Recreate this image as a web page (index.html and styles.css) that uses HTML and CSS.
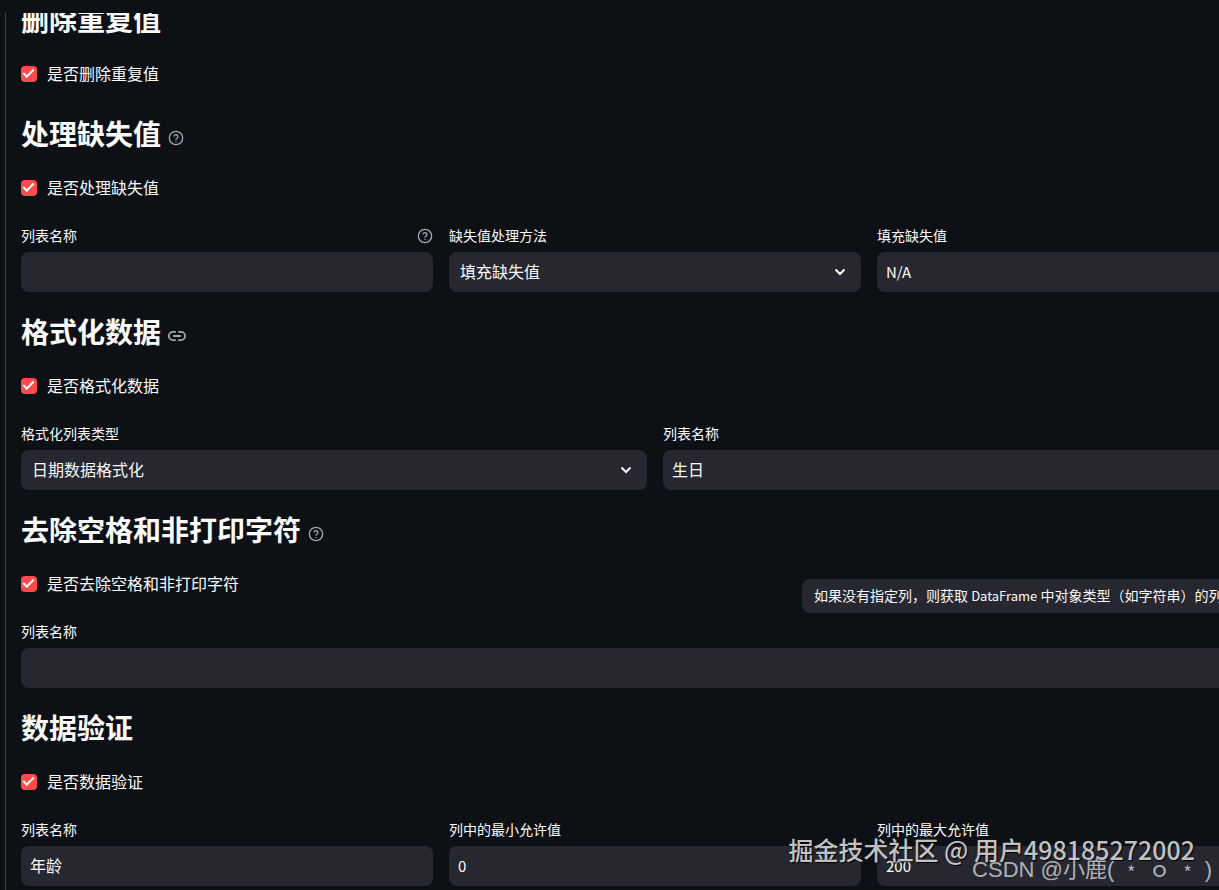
FILE: index.html
```html
<!DOCTYPE html>
<html lang="zh-CN">

<head>
    <meta charset="UTF-8">
    <meta name="viewport" content="width=device-width,initial-scale=1">
    <title>数据清洗</title>
    <link rel="stylesheet" href="styles.css">
</head>

<body>
    <svg class="defs" aria-hidden="true">
        <symbol id="help" viewBox="0 0 24 24">
            <circle cx="12" cy="12" r="10"></circle>
            <path d="M9.1 9a3 3 0 0 1 5.8 1c0 2-2.9 2.6-2.9 4"></path>
            <path d="M12 17.2v.1"></path>
        </symbol>
        <symbol id="link" viewBox="0 0 20 12">
            <path d="M8 1.5H5.5a4.5 4.5 0 0 0 0 9H8M12 1.5h2.5a4.5 4.5 0 0 1 0 9H12M6.5 6h7"></path>
        </symbol>
        <symbol id="down" viewBox="0 0 12 8">
            <path d="M1.5 1.5L6 6l4.5-4.5"></path>
        </symbol>
    </svg>
    <header class="topbar"></header>
    <main class="main">
        <form class="form">
            <section class="section">
                <h3 class="title">删除重复值</h3>
                <label class="check"><input type="checkbox" checked>是否删除重复值</label>
            </section>

            <section class="section">
                <h3 class="title">处理缺失值<svg class="icon"><use href="#help"></use></svg></h3>
                <label class="check"><input type="checkbox" checked>是否处理缺失值</label>
                <div class="row">
                    <div class="field">
                        <div class="label">
                            <label for="missing-cols">列表名称</label>
                            <svg class="icon"><use href="#help"></use></svg>
                        </div>
                        <input class="control" id="missing-cols" type="text">
                    </div>
                    <div class="field">
                        <div class="label"><label for="missing-way">缺失值处理方法</label></div>
                        <div class="select">
                            <select class="control" id="missing-way">
                                <option>填充缺失值</option>
                            </select>
                            <svg class="arrow"><use href="#down"></use></svg>
                        </div>
                    </div>
                    <div class="field">
                        <div class="label"><label for="missing-fill">填充缺失值</label></div>
                        <input class="control latin" id="missing-fill" type="text" value="N/A">
                    </div>
                </div>
            </section>

            <section class="section">
                <h3 class="title">格式化数据<svg class="icon link"><use href="#link"></use></svg></h3>
                <label class="check"><input type="checkbox" checked>是否格式化数据</label>
                <div class="row">
                    <div class="field">
                        <div class="label"><label for="format-type">格式化列表类型</label></div>
                        <div class="select">
                            <select class="control" id="format-type">
                                <option>日期数据格式化</option>
                            </select>
                            <svg class="arrow"><use href="#down"></use></svg>
                        </div>
                    </div>
                    <div class="field">
                        <div class="label"><label for="format-cols">列表名称</label></div>
                        <input class="control" id="format-cols" type="text" value="生日">
                    </div>
                </div>
            </section>

            <section class="section">
                <h3 class="title">去除空格和非打印字符<svg class="icon"><use href="#help"></use></svg></h3>
                <label class="check"><input type="checkbox" checked>是否去除空格和非打印字符</label>
                <div class="row">
                    <div class="field">
                        <div class="label"><label for="strip-cols">列表名称</label></div>
                        <input class="control" id="strip-cols" type="text">
                    </div>
                </div>
                <div class="tooltip" role="tooltip">如果没有指定列，则获取 <code>DataFrame</code> 中对象类型（如字符串）的列</div>
            </section>

            <section class="section">
                <h3 class="title">数据验证</h3>
                <label class="check"><input type="checkbox" checked>是否数据验证</label>
                <div class="row">
                    <div class="field">
                        <div class="label"><label for="valid-cols">列表名称</label></div>
                        <input class="control" id="valid-cols" type="text" value="年龄">
                    </div>
                    <div class="field">
                        <div class="label"><label for="valid-min">列中的最小允许值</label></div>
                        <input class="control latin" id="valid-min" type="text" value="0">
                    </div>
                    <div class="field">
                        <div class="label"><label for="valid-max">列中的最大允许值</label></div>
                        <input class="control latin" id="valid-max" type="text" value="200">
                    </div>
                </div>
            </section>
        </form>
    </main>
    <div class="mark mark-juejin">掘金技术社区 @ 用户498185272002</div>
    <div class="mark mark-csdn">CSDN @小鹿( ﹡ ｏ ﹡ )</div>
</body>

</html>
```
FILE: styles.css
```css
* {
    box-sizing: border-box;
    margin: 0;
    padding: 0;
}

body {
    display: flex;
    flex-direction: column;
    height: 100vh;
    overflow: hidden;
    position: relative;
    background: #0d1116;
    color: #fafafa;
    font-family: "Noto Sans CJK SC", sans-serif;
    font-size: 16px;
    line-height: 24px;
}

.defs {
    position: absolute;
    width: 0;
    height: 0;
}

.topbar {
    flex: none;
    height: 13px;
}

.main {
    flex: 1;
    min-height: 0;
    overflow: hidden;
}

/* the form is wider than the window and already scrolled a little */
.form {
    display: flex;
    flex-direction: column;
    gap: 16px;
    margin: -17px -86px 0 5px;
    padding: 0 15px 16px;
    border: 1px solid #41434a;
    border-top: 0;
}

.section {
    display: flex;
    flex-direction: column;
    gap: 16px;
    position: relative;
}

.title {
    display: flex;
    align-items: center;
    gap: 7px;
    height: 50px;
    padding-bottom: 5px;
    font-size: 28px;
    font-weight: 700;
    line-height: 44px;
}

.icon {
    flex: none;
    width: 16px;
    height: 16px;
    fill: none;
    stroke: #a3a5aa;
    stroke-width: 2;
    stroke-linecap: round;
    stroke-linejoin: round;
}

.title .icon {
    margin-top: 10px;
}

.icon.link {
    width: 18px;
    height: 12px;
}

.check {
    display: flex;
    align-items: center;
    gap: 10px;
    height: 32px;
    padding-bottom: 10px;
}

.check input {
    appearance: none;
    width: 16px;
    height: 16px;
    margin-top: 2px;
    border-radius: 4px;
    background: #ff4b4b;
}

.check input::before {
    content: "";
    display: block;
    width: 9px;
    height: 4px;
    margin: 3px 0 0 2px;
    border: solid #fff;
    border-width: 0 0 2px 2px;
    transform: rotate(-45deg);
}

.row {
    display: flex;
    gap: 16px;
}

.field {
    flex: 1;
    min-width: 0;
}

.label {
    display: flex;
    align-items: center;
    justify-content: space-between;
    height: 24px;
    margin-bottom: 4px;
    font-size: 14px;
}

.label label {
    align-self: flex-start;
    line-height: 22px;
}

.control {
    display: block;
    width: 100%;
    height: 40px;
    padding: 0 9px 2px;
    border: 0;
    border-radius: 8px;
    outline: 0;
    background: #262730;
    color: #fafafa;
    font: inherit;
}

.control.latin {
    font-size: 15px;
}

.select {
    position: relative;
}

.select .control {
    appearance: none;
    padding: 0 11px 2px;
}

.arrow {
    position: absolute;
    top: 16px;
    right: 15px;
    width: 12px;
    height: 8px;
    fill: none;
    stroke: #fafafa;
    stroke-width: 2;
    pointer-events: none;
}

.tooltip {
    position: absolute;
    top: 73px;
    left: 781px;
    right: 0;
    padding: 4px 12px 6px;
    border-radius: 8px;
    background: #262730;
    font-size: 14px;
    white-space: nowrap;
}

.tooltip code {
    font-family: inherit;
    font-size: 13px;
    line-height: 1;
}

.mark {
    position: absolute;
    white-space: nowrap;
    pointer-events: none;
}

.mark-juejin {
    right: 24px;
    bottom: 23px;
    color: rgba(255, 255, 255, .75);
    font-size: 25px;
    font-weight: 500;
    line-height: 36px;
    text-shadow: 1px 1px 1px #000;
}

.mark-csdn {
    right: 7px;
    bottom: 4px;
    color: rgba(255, 255, 255, .65);
    font-family: "Liberation Sans", "Noto Sans CJK SC", sans-serif;
    font-size: 22px;
    line-height: 32px;
}
```
